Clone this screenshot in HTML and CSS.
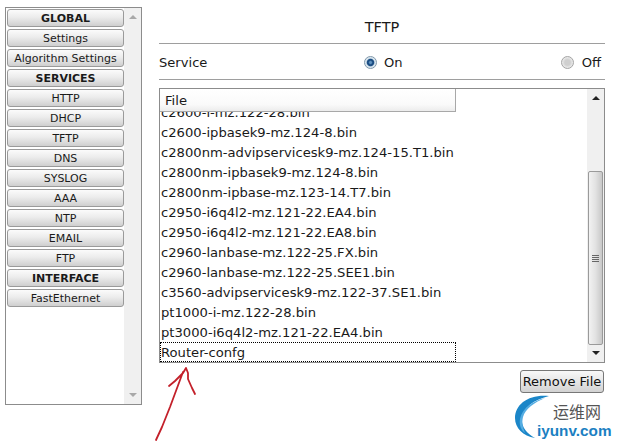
FILE: index.html
```html
<!DOCTYPE html>
<html lang="en">
<head>
<meta charset="utf-8">
<title>TFTP</title>
<link rel="stylesheet" href="styles.css">
</head>
<body>
<div class="app">
  <nav class="sidebar">
    <div class="nav-list">
      <div class="nav-btn head">GLOBAL</div>
      <div class="nav-btn">Settings</div>
      <div class="nav-btn">Algorithm Settings</div>
      <div class="nav-btn head">SERVICES</div>
      <div class="nav-btn">HTTP</div>
      <div class="nav-btn">DHCP</div>
      <div class="nav-btn">TFTP</div>
      <div class="nav-btn">DNS</div>
      <div class="nav-btn">SYSLOG</div>
      <div class="nav-btn">AAA</div>
      <div class="nav-btn">NTP</div>
      <div class="nav-btn">EMAIL</div>
      <div class="nav-btn">FTP</div>
      <div class="nav-btn head">INTERFACE</div>
      <div class="nav-btn">FastEthernet</div>
    </div>
    <div class="side-scroll">
      <span class="arrow up light"></span>
      <span class="arrow down light"></span>
    </div>
  </nav>
  <main class="panel">
    <h1 class="title">TFTP</h1>
    <div class="service">
      <span class="service-label">Service</span>
      <label class="radio-on"><span class="radio checked"></span>On</label>
      <label class="radio-off"><span class="radio"></span>Off</label>
    </div>
    <div class="files">
      <div class="file-area">
        <div class="file-clip">
          <div class="file-row">c2600-i-mz.122-28.bin</div>
          <div class="file-row">c2600-ipbasek9-mz.124-8.bin</div>
          <div class="file-row">c2800nm-advipservicesk9-mz.124-15.T1.bin</div>
          <div class="file-row">c2800nm-ipbasek9-mz.124-8.bin</div>
          <div class="file-row">c2800nm-ipbase-mz.123-14.T7.bin</div>
          <div class="file-row">c2950-i6q4l2-mz.121-22.EA4.bin</div>
          <div class="file-row">c2950-i6q4l2-mz.121-22.EA8.bin</div>
          <div class="file-row">c2960-lanbase-mz.122-25.FX.bin</div>
          <div class="file-row">c2960-lanbase-mz.122-25.SEE1.bin</div>
          <div class="file-row">c3560-advipservicesk9-mz.122-37.SE1.bin</div>
          <div class="file-row">pt1000-i-mz.122-28.bin</div>
          <div class="file-row">pt3000-i6q4l2-mz.121-22.EA4.bin</div>
          <div class="file-row selected">Router-confg</div>
        </div>
        <div class="file-head">File</div>
      </div>
      <div class="list-scroll">
        <span class="arrow up"></span>
        <div class="thumb"><span class="grip"></span></div>
        <span class="arrow down"></span>
      </div>
    </div>
    <div class="actions"><button class="remove" type="button">Remove File</button></div>
  </main>
</div>
<svg class="annotation" width="60" height="90" viewBox="0 0 60 90" fill="none" stroke="#c3202a" stroke-width="1.8" stroke-linecap="round" stroke-linejoin="round" aria-hidden="true">
  <path d="M6 85 L12 72 L20 52 L33 17 M19 31 L25 26 L33 18 L36 13 M36 13 L38 18 L38 24 L42 33 L45 39"/>
</svg>
<div class="logo">
  <svg class="logo-mark" width="36" height="44" viewBox="0 0 36 44" aria-hidden="true">
    <path d="M36 1 C16 -1 2 9 2 23 C2 33 10 41 22 43 C13 38 8 31 9 23 C10 13 20 5 36 1 Z" fill="#1b86c8"/>
    <path d="M32 3 C20 6 9 13 7 24 C6 30 8 35 12 38 C10 33 8.500 28 10 22 C12 14 22 7 32 3 Z" fill="#55ade2"/>
  </svg>
  <span class="logo-cn">运维网</span>
  <span class="logo-en">iyunv.com</span>
</div>
</body>
</html>
```

FILE: styles.css
```css
* { box-sizing: border-box; }
html, body { margin: 0; padding: 0; }
body {
  position: relative;
  width: 617px;
  height: 445px;
  overflow: hidden;
  background: #fff;
  color: #1a1a1a;
  font-family: "DejaVu Sans", Verdana, sans-serif;
}
.app { display: flex; align-items: flex-start; padding: 7px 12px 0 5px; gap: 17px; }

.sidebar {
  display: flex;
  width: 137px;
  height: 398px;
  flex: none;
  border: 1px solid #8c8c8c;
  background: #fff;
}
.nav-list { flex: 1; padding: 1px 0 0 1px; display: flex; flex-direction: column; gap: 2px; }
.nav-btn {
  width: 117px;
  height: 18px;
  border: 1px solid #9a9a9a;
  border-radius: 3px;
  background: linear-gradient(#fbfbfb, #ececec 45%, #cfcfcf);
  font-size: 11px;
  line-height: 18px;
  text-align: center;
  white-space: nowrap;
}
.nav-btn.head { font-weight: bold; }
.side-scroll {
  width: 17px;
  background: #f0f0f0;
  display: flex;
  flex-direction: column;
  justify-content: space-between;
  align-items: center;
  padding: 7px 0;
}
.arrow { width: 0; height: 0; border-left: 4px solid transparent; border-right: 4px solid transparent; }
.arrow.up { border-bottom: 4px solid #222; }
.arrow.down { border-top: 4px solid #222; }
.arrow.up.light { border-bottom-color: #a8a8a8; }
.arrow.down.light { border-top-color: #a8a8a8; }

.panel { flex: 1; display: flex; flex-direction: column; min-width: 0; }
.title {
  margin: 0;
  height: 37px;
  padding-top: 12px;
  border-bottom: 1px solid #9e9e9e;
  font-size: 14.500px;
  font-weight: normal;
  line-height: 17px;
  text-align: center;
}
.service {
  display: flex;
  align-items: center;
  height: 36px;
  padding: 2px 4px 0 0;
  border-bottom: 1px solid #9e9e9e;
  font-size: 13.100px;
}
.service-label { width: 205px; }
.radio-on, .radio-off { display: flex; align-items: center; gap: 8px; }
.radio-on { gap: 7px; }
.radio-off { margin-left: auto; }
.radio {
  width: 13px;
  height: 13px;
  border-radius: 50%;
  border: 1px solid #a4a4a4;
  background: radial-gradient(circle, #cfcfcf 0 35%, #e4e4e4 60%, #f6f6f6 100%);
}
.radio.checked {
  border-color: #7f97aa;
  background: radial-gradient(circle, #5f92c0 0 12%, #17497f 30%, #1c4f86 42%, #d4e2ec 55%, #f4f8fb 100%);
}

.files {
  display: flex;
  height: 275px;
  margin-top: 8px;
  border: 1px solid #8c8c8c;
}
.file-area { position: relative; flex: 1; overflow: hidden; }
.file-clip { height: 273px; padding-top: 13px; overflow: hidden; }
.file-row {
  width: 296px;
  height: 20px;
  padding-left: 1px;
  font-size: 13.150px;
  line-height: 22px;
  white-space: nowrap;
}
.file-row.selected { outline: 1px dotted #000; outline-offset: -1px; }
.file-head {
  position: absolute;
  top: 0;
  left: 0;
  width: 296px;
  height: 23px;
  padding-left: 5px;
  border: 1px solid #a8a8a8;
  border-top: 0;
  border-left: 0;
  background: linear-gradient(#fff, #fafafa 70%, #ececec);
  font-size: 13.150px;
  line-height: 23px;
}
.list-scroll {
  width: 17px;
  background: #f0f0f0;
  display: flex;
  flex-direction: column;
  align-items: center;
  padding-top: 7px;
}
.thumb {
  display: flex;
  align-items: center;
  justify-content: center;
  width: 15px;
  height: 174px;
  margin-top: 71px;
  border: 1px solid #9a9a9a;
  border-radius: 2px;
  background: linear-gradient(90deg, #f2f2f2, #e2e2e2 50%, #c8c8c8);
}
.grip {
  width: 7px;
  height: 7px;
  background: repeating-linear-gradient(#666 0 1px, transparent 1px 2px);
}
.list-scroll .arrow.down { margin-top: 6px; }

.actions { display: flex; justify-content: flex-end; margin-top: 7px; padding-right: 1px; }
.remove {
  width: 84px;
  height: 23px;
  padding: 0;
  border: 1px solid #777;
  border-radius: 3px;
  background: linear-gradient(#f8f8f8, #e6e6e6 50%, #d2d2d2);
  color: #111;
  font: 13px "DejaVu Sans", Verdana, sans-serif;
}

.annotation { position: absolute; left: 150px; top: 355px; }
.logo { position: absolute; left: 513px; top: 395px; width: 104px; height: 46px; }
.logo-mark { position: absolute; left: 0; top: 0; }
.logo-cn {
  position: absolute;
  left: 40px;
  top: 7px;
  font: 16px/19px "Noto Sans CJK SC", sans-serif;
  color: #555;
}
.logo-en {
  position: absolute;
  left: 24px;
  top: 27px;
  font: bold 15.300px/17px "Liberation Sans", Arial, sans-serif;
  color: #1b7fc2;
}
```
